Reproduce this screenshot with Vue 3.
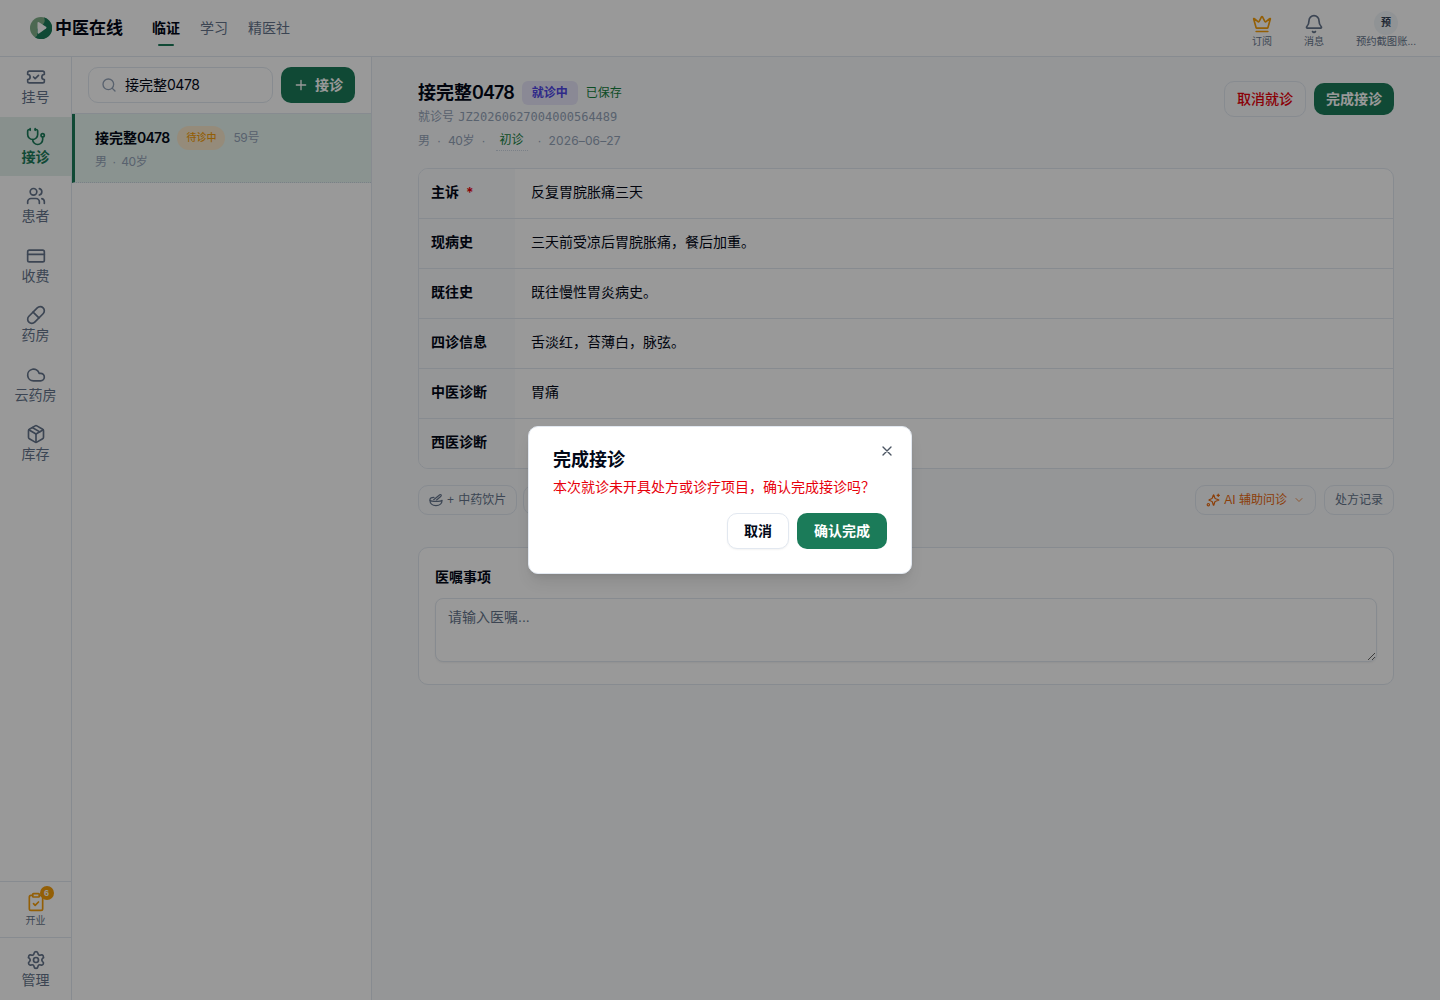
<script setup>
const icons = {
  ticket: '<path d="M2 9a3 3 0 1 1 0 6v2a2 2 0 0 0 2 2h16a2 2 0 0 0 2-2v-2a3 3 0 1 1 0-6V7a2 2 0 0 0-2-2H4a2 2 0 0 0-2 2Z"/><path d="m9 12 2 2 4-4"/>',
  steth: '<path d="M11 2v2"/><path d="M5 2v2"/><path d="M5 3H4a2 2 0 0 0-2 2v4a6 6 0 0 0 12 0V5a2 2 0 0 0-2-2h-1"/><path d="M8 15a6 6 0 0 0 12 0v-3"/><circle cx="20" cy="10" r="2"/>',
  users: '<path d="M16 21v-2a4 4 0 0 0-4-4H6a4 4 0 0 0-4 4v2"/><circle cx="9" cy="7" r="4"/><path d="M22 21v-2a4 4 0 0 0-3-3.870"/><path d="M16 3.130a4 4 0 0 1 0 7.750"/>',
  card: '<rect width="20" height="14" x="2" y="5" rx="2"/><path d="M2 10h20"/>',
  pill: '<path d="m10.500 20.500 10-10a4.950 4.950 0 1 0-7-7l-10 10a4.950 4.950 0 1 0 7 7Z"/><path d="m8.500 8.500 7 7"/>',
  cloud: '<path d="M17.500 19H9a7 7 0 1 1 6.710-9h1.790a4.500 4.500 0 1 1 0 9Z"/>',
  box: '<path d="m7.500 4.270 9 5.150"/><path d="M21 8a2 2 0 0 0-1-1.730l-7-4a2 2 0 0 0-2 0l-7 4A2 2 0 0 0 3 8v8a2 2 0 0 0 1 1.730l7 4a2 2 0 0 0 2 0l7-4A2 2 0 0 0 21 16Z"/><path d="m3.300 7 8.700 5 8.700-5"/><path d="M12 22V12"/>',
}
const nav = [
  { label: '挂号', icon: icons.ticket },
  { label: '接诊', icon: icons.steth, active: true },
  { label: '患者', icon: icons.users },
  { label: '收费', icon: icons.card },
  { label: '药房', icon: icons.pill },
  { label: '云药房', icon: icons.cloud },
  { label: '库存', icon: icons.box },
]
const rows = [
  { label: '主诉', value: '反复胃脘胀痛三天', required: true },
  { label: '现病史', value: '三天前受凉后胃脘胀痛，餐后加重。' },
  { label: '既往史', value: '既往慢性胃炎病史。' },
  { label: '四诊信息', value: '舌淡红，苔薄白，脉弦。' },
  { label: '中医诊断', value: '胃痛' },
  { label: '西医诊断', value: '' },
]
</script>

<template>
  <div class="app">
    <header class="topbar">
      <div class="brand">
        <svg class="logo" width="22" height="22" viewBox="0 0 22 22">
          <circle cx="11" cy="11" r="11" fill="#7fae88" />
          <path d="M14 0.500A11 11 0 1 1 5 20.200C9 19 6.500 15 7 12C10 9 17 7 14 0.500Z" fill="#1b7b59" />
          <path d="M7.500 6Q7.600 4.500 9 5.200L16 9.800Q17.200 10.700 16 11.600L9 16.400Q7.500 17.200 7.500 15.500Z" fill="#fff" />
        </svg>
        <span>中医在线</span>
      </div>
      <nav class="tabs">
        <span class="tab on">临证</span>
        <span class="tab">学习</span>
        <span class="tab">精医社</span>
      </nav>
      <div class="tools">
        <div class="tool">
          <svg class="ic crown" width="20" height="20" viewBox="0 0 24 24"><path d="M11.562 3.266a.5.5 0 0 1 .876 0L15.390 8.870a1 1 0 0 0 1.516.294L21.183 5.500a.5.5 0 0 1 .798.519l-2.834 10.246a1 1 0 0 1-.956.734H5.810a1 1 0 0 1-.957-.734L2.020 6.020a.5.5 0 0 1 .798-.519l4.276 3.664a1 1 0 0 0 1.516-.294z" /><path d="M5 21h14" /></svg>
          <span>订阅</span>
        </div>
        <div class="tool">
          <svg class="ic" width="20" height="20" viewBox="0 0 24 24"><path d="M10.268 21a2 2 0 0 0 3.464 0" /><path d="M3.262 15.326A1 1 0 0 0 4 17h16a1 1 0 0 0 .740-1.673C19.410 13.956 18 12.499 18 8A6 6 0 0 0 6 8c0 4.499-1.411 5.956-2.738 7.326" /></svg>
          <span>消息</span>
        </div>
        <div class="tool account">
          <i class="avatar">预</i>
          <span>预约截图账...</span>
        </div>
      </div>
    </header>

    <div class="body">
      <aside class="rail">
        <div v-for="n in nav" :key="n.label" class="nav" :class="{ active: n.active }">
          <svg class="ic" width="20" height="20" viewBox="0 0 24 24" v-html="n.icon"></svg>
          <span>{{ n.label }}</span>
        </div>
        <div class="opening">
          <div class="clip">
            <svg class="ic" width="20" height="20" viewBox="0 0 24 24"><rect width="8" height="4" x="8" y="2" rx="1" /><path d="M16 4h2a2 2 0 0 1 2 2v14a2 2 0 0 1-2 2H6a2 2 0 0 1-2-2V6a2 2 0 0 1 2-2h2" /><path d="m9 14 2 2 4-4" /></svg>
            <b>6</b>
          </div>
          <span>开业</span>
        </div>
        <div class="manage">
          <svg class="ic" width="20" height="20" viewBox="0 0 24 24"><path d="M9.671 4.136a2.340 2.340 0 0 1 4.659 0 2.340 2.340 0 0 0 3.319 1.915 2.340 2.340 0 0 1 2.330 4.033 2.340 2.340 0 0 0 0 3.831 2.340 2.340 0 0 1-2.330 4.033 2.340 2.340 0 0 0-3.319 1.915 2.340 2.340 0 0 1-4.659 0 2.340 2.340 0 0 0-3.320-1.915 2.340 2.340 0 0 1-2.330-4.033 2.340 2.340 0 0 0 0-3.831A2.340 2.340 0 0 1 6.350 6.051a2.340 2.340 0 0 0 3.319-1.915" /><circle cx="12" cy="12" r="3" /></svg>
          <span>管理</span>
        </div>
      </aside>

      <section class="queue">
        <div class="search-row">
          <div class="search">
            <svg class="ic" width="16" height="16" viewBox="0 0 24 24"><circle cx="11" cy="11" r="8" /><path d="m21 21-4.300-4.300" /></svg>
            <span>接完整<span class="num">0478</span></span>
          </div>
          <button class="primary add">
            <svg class="ic" width="16" height="16" viewBox="0 0 24 24"><path d="M5 12h14M12 5v14" /></svg>接诊
          </button>
        </div>
        <div class="patient">
          <div class="line"><strong>接完整<span class="num">0478</span></strong><span class="wait">待诊中</span><span class="no"><span class="num">59</span>号</span></div>
          <div class="meta">男 · <span class="num">40</span>岁</div>
        </div>
      </section>

      <main class="main">
        <div class="head">
          <div class="info">
            <div class="title"><h1>接完整<span class="num">0478</span></h1><span class="status">就诊中</span><span class="saved">已保存</span></div>
            <div class="visit">就诊号 <code>JZ20260627004000564489</code></div>
            <div class="facts"><span>男</span><span>·</span><span><span class="num">40</span>岁</span><span>·</span><span class="first">初诊</span><span>·</span><span class="num date">2026–06–27</span></div>
          </div>
          <div class="actions">
            <button class="outline danger">取消就诊</button>
            <button class="primary done">完成接诊</button>
          </div>
        </div>

        <div class="record">
          <div v-for="r in rows" :key="r.label" class="row">
            <div class="key">{{ r.label }}<em v-if="r.required">*</em></div>
            <div class="val">{{ r.value }}</div>
          </div>
        </div>

        <div class="chips">
          <div class="left">
            <span class="chip herb">
              <svg class="ic" width="14" height="14" viewBox="0 0 24 24"><path d="M1.500 12.500c3 2.500 18 2.500 21 0 0 5-4 9-10.500 9s-10.500-4-10.500-9Z" /><path d="M1.500 12c0-3 3.500-4.500 7-4.500" /><path d="m8 11.500 10.500-8.500c2-1 3.500 1 2 2.500L13 12" /></svg>
              + 中药饮片
            </span>
            <span class="chip">+ 中成药</span>
          </div>
          <div class="right">
            <span class="chip ai">
              <svg class="ic" width="14" height="14" viewBox="0 0 24 24"><path d="M10.937 15.500A2 2 0 0 0 9.500 14.063l-4.135-1.582a.5.5 0 0 1 0-.962L9.500 9.936A2 2 0 0 0 10.937 8.500l1.582-5.135a.5.5 0 0 1 .963 0L15.063 8.500A2 2 0 0 0 16.500 9.937l5.135 1.581a.5.5 0 0 1 0 .964L16.500 14.063a2 2 0 0 0-1.437 1.437l-1.582 5.135a.5.5 0 0 1-.963 0z" /><path d="M21 2v4M23 4h-4" /><circle cx="4" cy="20" r="2" /></svg>
              AI 辅助问诊
              <svg class="ic chev" width="12" height="12" viewBox="0 0 24 24"><path d="m6 9 6 6 6-6" /></svg>
            </span>
            <span class="chip">处方记录</span>
          </div>
        </div>

        <div class="advice">
          <h2>医嘱事项</h2>
          <textarea placeholder="请输入医嘱..."></textarea>
        </div>
      </main>
    </div>

    <div class="overlay">
      <div class="dialog">
        <svg class="ic close" width="16" height="16" viewBox="0 0 24 24"><path d="M18 6 6 18M6 6l12 12" /></svg>
        <h3>完成接诊</h3>
        <p>本次就诊未开具处方或诊疗项目，确认完成接诊吗？</p>
        <div class="foot">
          <button class="outline">取消</button>
          <button class="primary">确认完成</button>
        </div>
      </div>
    </div>
  </div>
</template>

<style>
body { background: #fff; overflow: hidden; }
</style>

<style scoped>
* { box-sizing: border-box; }
.app { position: relative; height: 1000px; display: flex; flex-direction: column; overflow: hidden; background: #fff; color: #020817; font: 14px/20px "Liberation Sans", "Noto Sans CJK SC", sans-serif; }
.num { font-family: Inter, sans-serif; letter-spacing: -.035em; line-height: 1; }
strong .num, h1 .num { letter-spacing: -.052em; }
button, textarea { font: inherit; }
h1, h2, h3, p { margin: 0; }
.ic { display: block; flex: none; fill: none; stroke: currentColor; stroke-width: 2; stroke-linecap: round; stroke-linejoin: round; }
.topbar { height: 57px; flex: none; display: flex; align-items: center; border-bottom: 1px solid #e2e8f0; padding: 0 24px 0 30px; }
.brand { display: flex; align-items: center; gap: 3px; width: 122px; font-size: 17px; font-weight: 600; white-space: nowrap; }
.brand span { padding-top: 1px; }
.logo { display: block; }
.tabs { display: flex; gap: 20px; height: 56px; align-items: center; color: #64748b; }
.tab { position: relative; }
.tab.on { color: #020817; font-weight: 600; }
.tab.on::after { content: ""; position: absolute; left: 6px; right: 6px; bottom: -8px; height: 2px; border-radius: 1px; background: #1b7b59; }
.tools { margin-left: auto; display: flex; color: #64748b; font-size: 10px; line-height: 12px; padding-top: 2px; }
.tool { display: flex; flex-direction: column; align-items: center; gap: 2px; width: 52px; padding-top: 3px; }
.account { width: 60px; margin-left: 16px; padding-top: 0; gap: 1px; white-space: nowrap; font-size: 10.300px; }
.crown { color: #f59e0b; }
.avatar { width: 24px; height: 24px; border-radius: 50%; background: #f1f5f9; font-style: normal; font-size: 10px; font-weight: 600; line-height: 24px; text-align: center; color: #334155; }
.body { flex: 1; display: flex; min-height: 0; }
.rail { width: 72px; flex: none; border-right: 1px solid #e2e8f0; display: flex; flex-direction: column; color: #64748b; }
.nav { height: 59.500px; flex: none; display: flex; flex-direction: column; align-items: center; padding-top: 10px; }
.nav.active { background: #e3f0ec; color: #1b7b59; font-weight: 600; }
.opening { margin-top: auto; height: 56px; border-top: 1px solid #e2e8f0; display: flex; flex-direction: column; align-items: center; padding-top: 10px; font-size: 10px; line-height: 18px; }
.clip { position: relative; color: #f59e0b; }
.clip b { position: absolute; left: 14px; top: -6px; width: 14px; height: 14px; border-radius: 50%; background: #f59e0b; color: #fff; font-size: 9px; line-height: 14px; text-align: center; font-weight: 600; }
.manage { height: 63px; border-top: 1px solid #e2e8f0; display: flex; flex-direction: column; align-items: center; padding-top: 12px; }
.queue { width: 300px; flex: none; border-right: 1px solid #e2e8f0; }
.search-row { height: 57px; border-bottom: 1px solid #e2e8f0; display: flex; gap: 8px; padding: 10px 16px; }
.search { flex: 1; height: 36px; border: 1px solid #e2e8f0; border-radius: 10px; display: flex; align-items: center; gap: 8px; padding-left: 12px; }
.search .ic { color: #94a3b8; }
button { display: inline-flex; align-items: center; justify-content: center; border: 0; padding: 0; height: 36px; border-radius: 10px; font-weight: 600; white-space: nowrap; }
.primary { background: #1b7b59; color: #fff; }
.outline { border: 1px solid #e2e8f0; background: #fff; color: #020817; box-shadow: 0 1px 2px rgba(0, 0, 0, .05); }
.add { width: 74px; gap: 6px; }
.patient { height: 69px; border-left: 3px solid #1b7b59; border-bottom: 1px dotted #cbd5e1; background: #e6f5f0; padding: 12px 20px; }
.line { display: flex; align-items: center; gap: 8px; height: 24px; }
.line strong { font-weight: 600; }
.wait { height: 24px; border-radius: 12px; padding: 0 9px; background: #f8e8cc; color: #f59e0b; font-size: 10px; line-height: 24px; font-weight: 500; }
.no { font-size: 12px; color: #94a3b8; }
.meta { color: #94a3b8; font-size: 12px; line-height: 16px; margin-top: 4px; word-spacing: 1.800px; }
.main { flex: 1; background: #f8fafc; padding: 24px 46px; }
.head { display: flex; justify-content: space-between; height: 87px; }
.title { display: flex; align-items: center; gap: 8px; height: 24px; }
h1 { font-size: 18px; font-weight: 600; }
.status { background: #e6e5f8; color: #4f46e5; border-radius: 6px; height: 24px; line-height: 24px; padding: 0 10px; font-size: 12px; font-weight: 600; }
.saved { font-size: 12px; color: #15803d; }
.visit { color: #94a3b8; font-size: 12px; line-height: 24px; }
.visit code { font: 12px "DejaVu Sans Mono", monospace; margin-left: 1px; }
.facts { display: flex; gap: 7px; color: #94a3b8; font-size: 12px; line-height: 24px; }
.first { color: #15803d; border-bottom: 1px dotted #cbd5e1; padding: 0 4px; margin: 0 3px; height: 22px; line-height: 22px; }
.date { line-height: 24px; letter-spacing: .012em; }
.actions { display: flex; gap: 8px; align-items: center; height: 36px; }
.danger { width: 82px; background: transparent; color: #e7000b; font-weight: 500; box-shadow: none; }
.done { width: 80px; height: 32px; }
.record { border: 1px solid #e2e8f0; border-radius: 10px; overflow: hidden; background: #fff; }
.row { display: flex; height: 50px; border-bottom: 1px solid #e2e8f0; }
.row:last-child { height: 49px; border-bottom: 0; }
.key { width: 96px; background: #f8fafc; padding: 13px 12px; font-weight: 600; }
.key em { color: #e7000b; font: 600 14px/16px Inter, sans-serif; margin-left: 7px; vertical-align: -1px; }
.val { padding: 13px 16px; }
.chips { display: flex; justify-content: space-between; margin-top: 16px; }
.left { display: flex; gap: 6px; }
.right { display: flex; gap: 8px; }
.chip { height: 30px; border: 1px solid #e2e8f0; border-radius: 10px; display: flex; align-items: center; gap: 4px; padding: 0 10px; font-size: 12px; color: #64748b; white-space: nowrap; }
.herb { word-spacing: 1px; }
.ai { color: #ea680c; }
.chev { margin-left: 2px; opacity: .7; }
.advice { margin-top: 32px; height: 138px; border: 1px solid #e2e8f0; border-radius: 10px; background: #fff; padding: 19px 16px; }
h2 { font-size: 14px; line-height: 20px; font-weight: 600; }
textarea { display: block; width: 100%; height: 64px; margin-top: 11px; border: 1px solid #e2e8f0; border-radius: 8px; padding: 8px 12px; background: #fff; resize: vertical; box-shadow: 0 1px 2px rgba(0, 0, 0, .05); }
textarea::placeholder { color: #64748b; }
.overlay { position: absolute; inset: 0; background: rgba(0, 0, 0, .4); display: flex; align-items: center; justify-content: center; }
.dialog { position: relative; width: 384px; height: 148px; background: #fff; border: 1px solid #e2e8f0; border-radius: 10px; padding: 24px; box-shadow: 0 10px 15px -3px rgba(0, 0, 0, .1), 0 4px 6px -4px rgba(0, 0, 0, .1); }
.close { position: absolute; right: 16px; top: 16px; color: #4b5563; }
h3 { font-size: 18px; line-height: 18px; font-weight: 600; }
.dialog p { color: #e7000b; margin-top: 8px; white-space: nowrap; }
.foot { display: flex; justify-content: flex-end; gap: 8px; margin-top: 16px; }
.foot .outline { width: 62px; }
.foot .primary { width: 90px; }
</style>
